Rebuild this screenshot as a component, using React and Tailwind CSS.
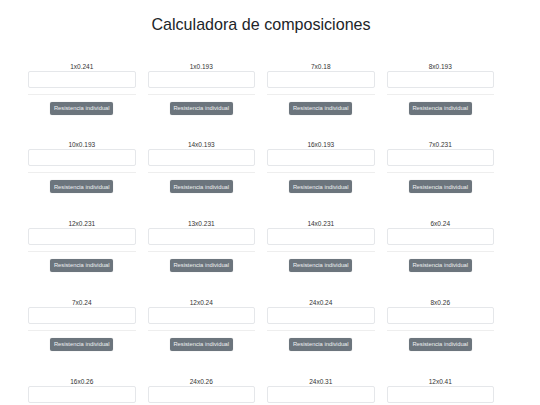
import { useState } from "react";

const composiciones = [
  "1x0.241", "1x0.193", "7x0.18", "8x0.193",
  "10x0.193", "14x0.193", "16x0.193", "7x0.231",
  "12x0.231", "13x0.231", "14x0.231", "6x0.24",
  "7x0.24", "12x0.24", "24x0.24", "8x0.26",
  "16x0.26", "24x0.26", "24x0.31", "12x0.41",
];

const Celda = ({ nombre }) => {
  const [valor, setValor] = useState("");

  return (
    <div className="flex flex-col items-center">
      <label className="block h-[8px] text-[6.5px] leading-[8px] text-[#333]">{nombre}</label>
      <input
        type="text"
        value={valor}
        onChange={(e) => setValor(e.target.value)}
        className="w-full h-[17px] border border-[#e5e7ea] rounded-[2px] bg-white outline-none"
      />
      <hr className="w-full mt-[6px] border-0 border-t border-[#eeeeee]" />
      <button className="mt-[7px] h-[13px] w-[63px] bg-[#6c757d] text-[#eef0f2] text-[5.8px] rounded-[2px] shadow-[0_0_1px_rgba(0,0,0,0.25)]">
        Resistencia individual
      </button>
    </div>
  );
};

const App = () => {
  return (
    <div className="w-[522px] bg-white font-['Liberation_Sans',Arial,sans-serif]">
      <h1 className="pt-[15.4px] text-center text-[16.1px] leading-[19.2px] text-[#212529]">
        Calculadora de composiciones
      </h1>
      <div className="grid grid-cols-4 gap-x-[12px] gap-y-[26.8px] px-[28px] mt-[28px] pb-[30px]">
        {composiciones.map((c, index) => (
          <Celda key={index} nombre={c} />
        ))}
      </div>
    </div>
  );
};

export default App;
